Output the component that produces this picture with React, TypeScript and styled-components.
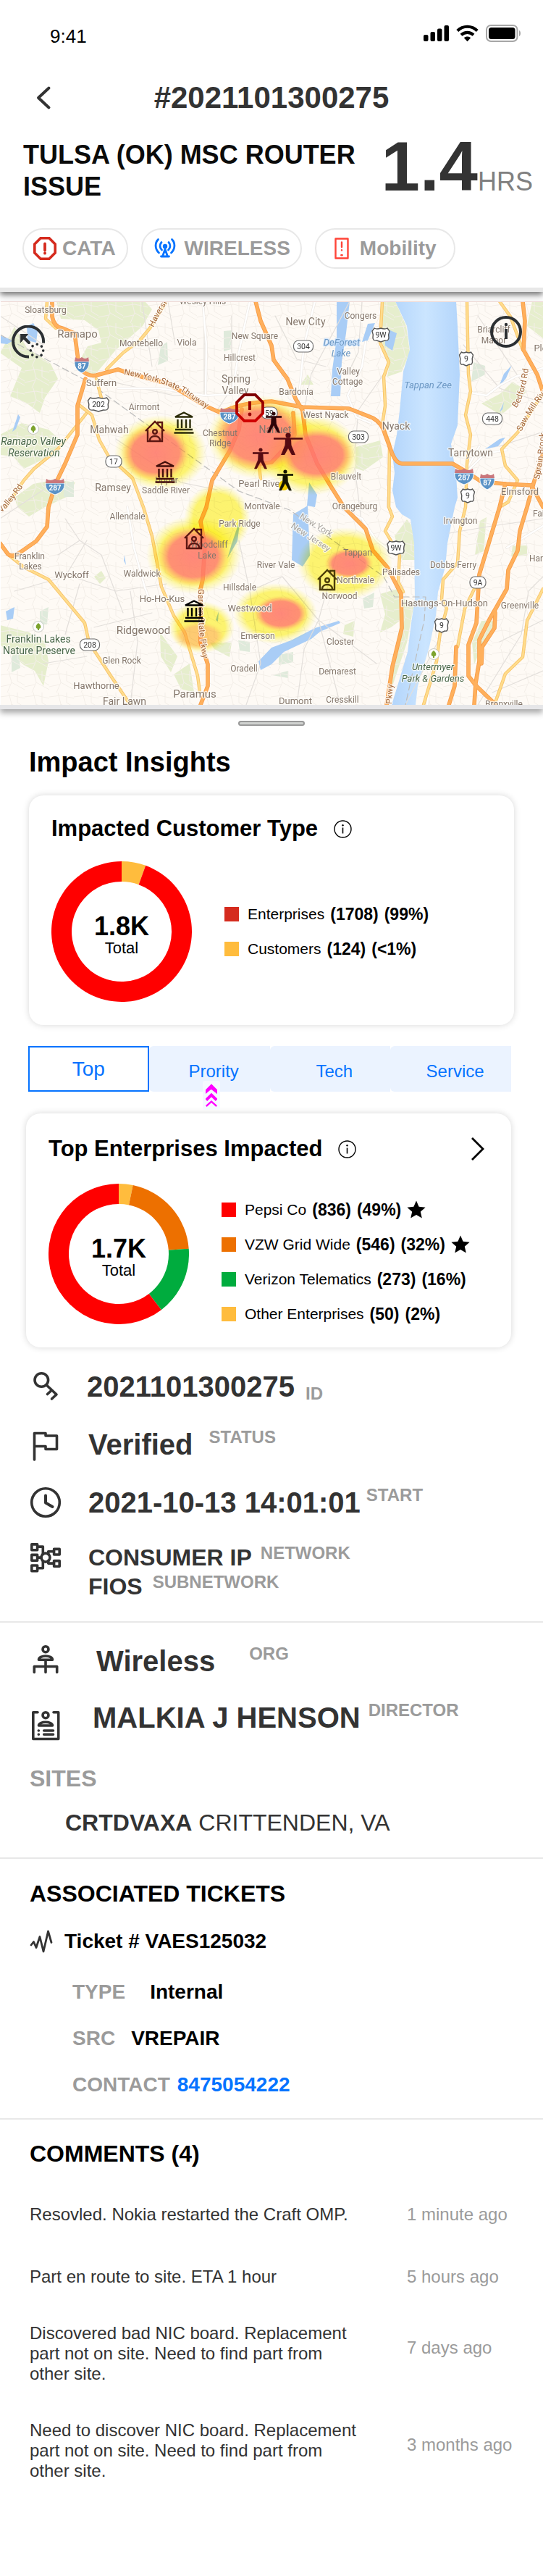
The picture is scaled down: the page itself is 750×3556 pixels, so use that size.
import React from "react";
import styled, { createGlobalStyle } from "styled-components";

const GlobalStyle = createGlobalStyle`
  *, *::before, *::after { box-sizing: border-box; }
  body {
    margin: 0;
    background: #fff;
    color: #000;
    font-family: "Liberation Sans", Arial, Helvetica, sans-serif;
  }
  h1, h2, h3, p, dl, dd, dt, ul { margin: 0; padding: 0; font-size: inherit; font-weight: inherit; }
  ul { list-style: none; }
  button { font: inherit; color: inherit; background: none; border: 0; padding: 0; cursor: pointer; }
  svg { display: block; }
`;

const ink = "#333333";
const muted = "#9b9b9b";
const blue = "#0673ff";
const hairline = "#e8e8e8";

/* ---------- header ---------- */

const Page = styled.main`
  width: 100%;
  background: #fff;
`;

const Header = styled.header`
  border-bottom: 6px solid ${hairline};
  box-shadow: 0 4px 8px rgba(0, 0, 0, 0.55);
`;

const StatusBar = styled.div`
  display: flex;
  align-items: center;
  justify-content: space-between;
  height: 100px;
  padding: 0 30px 0 69px;
  font-size: 26px;
`;

const StatusIcons = styled.div`
  display: flex;
  align-items: center;
  gap: 10px;
  padding-bottom: 8px;
`;

const NavBar = styled.nav`
  display: grid;
  grid-template-columns: 1fr auto 1fr;
  align-items: center;
  height: 70px;
  padding: 0 48px;
`;

const BackButton = styled.button`
  justify-self: start;
`;

const NavTitle = styled.h1`
  font-size: 42px;
  font-weight: 700;
  color: ${ink};
`;

const Incident = styled.div`
  display: flex;
  align-items: flex-start;
  justify-content: space-between;
  padding: 12px 14px 0 32px;
`;

const IncidentTitle = styled.h2`
  flex: 1;
  padding-top: 10px;
  font-size: 36px;
  line-height: 44px;
  font-weight: 700;
  color: #0b0b0b;
`;

const Duration = styled.p`
  display: flex;
  align-items: baseline;
  font-size: 96px;
  line-height: 96px;
  font-weight: 700;
  color: ${ink};
`;

const Unit = styled.span`
  font-size: 36px;
  line-height: 44px;
  font-weight: 400;
  color: #808080;
`;

const Chips = styled.ul`
  display: flex;
  gap: 18px;
  padding: 35px 31px 26px;
`;

const Chip = styled.li<{ $left: number; $gap: number; $right: number }>`
  display: flex;
  align-items: center;
  gap: ${(p) => p.$gap}px;
  height: 56px;
  padding: 0 ${(p) => p.$right}px 0 ${(p) => p.$left}px;
  border: 2px solid ${hairline};
  border-radius: 28px;
  font-size: 28px;
  font-weight: 700;
  color: ${muted};
`;

/* ---------- map ---------- */

const MapPanel = styled.section`
  position: relative;
  margin-top: 13px;
  border-bottom: 6px solid #e6e6e8;
  box-shadow: 0 5px 8px rgba(0, 0, 0, 0.35);
`;

const MapButton = styled.button<{ $side: "left" | "right" }>`
  position: absolute;
  top: ${(p) => (p.$side === "left" ? 33 : 19)}px;
  ${(p) => (p.$side === "left" ? "left: 16px" : "right: 28px")};
`;

const MapSvg = styled.svg`
  width: 100%;
  height: auto;
`;

/* ---------- insights ---------- */

const Handle = styled.div`
  width: 92px;
  height: 7px;
  margin: 16px auto 0;
  border: 2px solid #999;
  border-radius: 4px;
  background: #d0d2d0;
`;

const InsightsTitle = styled.h2`
  margin: 28px 40px 24px;
  font-size: 38px;
  line-height: 44px;
  font-weight: 700;
`;

const Card = styled.section<{ $left: number; $right: number; $top: number; $gap: number }>`
  display: flex;
  flex-direction: column;
  gap: ${(p) => p.$gap}px;
  margin: 0 ${(p) => p.$right}px 0 ${(p) => p.$left}px;
  padding: ${(p) => p.$top}px 36px 32px 31px;
  border-radius: 20px;
  background: #fff;
  box-shadow: 0 0 10px rgba(0, 0, 0, 0.16);
`;

const CardHead = styled.div`
  display: flex;
  align-items: center;
  gap: 22px;
`;

const CardTitle = styled.h3`
  font-size: 31px;
  line-height: 40px;
  font-weight: 700;
`;

const MoreButton = styled.button`
  margin-left: auto;
`;

const CardBody = styled.div<{ $align: string }>`
  display: flex;
  align-items: ${(p) => p.$align};
  gap: 45px;
`;

const DonutBox = styled.div`
  display: grid;
  flex: none;
  place-items: center;
  > * { grid-area: 1 / 1; }
`;

const DonutText = styled.p`
  display: flex;
  flex-direction: column;
  align-items: center;
  padding-top: 10px;
  font-size: 22px;
  line-height: 24px;
`;

const DonutTotal = styled.strong`
  font-size: 36px;
  line-height: 36px;
`;

const Legend = styled.ul`
  display: flex;
  flex-direction: column;
  gap: 20px;
`;

const LegendRow = styled.li`
  display: flex;
  align-items: center;
  gap: 8px;
  font-size: 21px;
  line-height: 28px;
  white-space: nowrap;
  strong { font-size: 23px; }
`;

const Swatch = styled.span<{ $color: string }>`
  width: 20px;
  height: 20px;
  margin-right: 4px;
  background: ${(p) => p.$color};
`;

const Tabs = styled.div`
  display: grid;
  grid-template-columns: repeat(4, 1fr);
  margin: 29px 44px 30px 39px;
`;

const TabCell = styled.div`
  position: relative;
`;

const Tab = styled.button<{ $active?: boolean }>`
  width: 100%;
  height: 63px;
  color: ${blue};
  font-size: ${(p) => (p.$active ? 28 : 24)}px;
  background: ${(p) => (p.$active ? "#fff" : "#ebf3ff")};
  border: ${(p) => (p.$active ? `2px solid ${blue}` : "0")};
  border-radius: ${(p) => (p.$active ? "0" : "6px 0 0 6px")};
  padding: ${(p) => (p.$active ? "0" : "6px 0 0 12px")};
`;

const TabMarker = styled.span`
  position: absolute;
  top: 48px;
  left: 50%;
  padding: 4px;
  border-radius: 3px;
  background: #f5f9ff;
  transform: translateX(-9px);
`;

/* ---------- details ---------- */

const Details = styled.dl`
  display: flex;
  flex-direction: column;
  gap: 32px;
  padding: 30px 41px 28px;
  border-bottom: 2px solid ${hairline};
`;

const OrgSection = styled.section`
  padding: 29px 41px 28px;
  border-bottom: 2px solid ${hairline};
`;

const OrgList = styled.dl`
  display: flex;
  flex-direction: column;
  gap: 30px;
`;

const DetailRow = styled.div<{ $gap: number; $drop?: number }>`
  display: flex;
  align-items: flex-start;
  gap: ${(p) => p.$gap}px;
  > svg { flex: none; margin-top: ${(p) => p.$drop ?? 2}px; }
`;

const DetailLine = styled.div<{ $gap: number; $small?: boolean }>`
  display: flex;
  flex-direction: row-reverse;
  justify-content: flex-end;
  gap: ${(p) => p.$gap}px;
  font-size: ${(p) => (p.$small ? 32 : 40)}px;
  line-height: ${(p) => (p.$small ? 40 : 48)}px;
  font-weight: 700;
  color: ${ink};
`;

const DetailLabel = styled.dt<{ $low?: boolean }>`
  align-self: ${(p) => (p.$low ? "flex-end" : "flex-start")};
  font-size: 24px;
  line-height: 28px;
  color: ${muted};
`;

const SitesTitle = styled.h2`
  margin-top: 30px;
  font-size: 32px;
  line-height: 40px;
  font-weight: 700;
  color: ${muted};
`;

const Site = styled.p`
  padding: 21px 0 0 49px;
  font-size: 32px;
  line-height: 40px;
  color: ${ink};
`;

/* ---------- tickets and comments ---------- */

const Section = styled.section`
  padding: 28px 41px;
  border-bottom: 2px solid ${hairline};
`;

const SectionTitle = styled.h2`
  font-size: 32px;
  line-height: 40px;
  font-weight: 700;
`;

const Ticket = styled.h3`
  display: flex;
  align-items: center;
  gap: 16px;
  margin: 28px 0 34px;
  font-size: 28px;
  line-height: 36px;
  font-weight: 700;
`;

const TicketFields = styled.dl`
  display: flex;
  flex-direction: column;
  gap: 28px;
  padding-left: 59px;
`;

const TicketField = styled.div<{ $gap: number }>`
  display: flex;
  gap: ${(p) => p.$gap}px;
  font-size: 28px;
  line-height: 36px;
  font-weight: 700;
  dt { color: ${muted}; }
  a { color: ${blue}; text-decoration: none; }
`;

const Comments = styled.section`
  padding: 27px 36px 131px 41px;
`;

const CommentList = styled.ul`
  padding-top: 50px;
`;

const Comment = styled.li<{ $short?: boolean; $space: number }>`
  display: grid;
  grid-template-columns: minmax(0, 460px) 1fr;
  column-gap: 61px;
  margin-bottom: ${(p) => p.$space}px;
  font-size: 24px;
  line-height: 28px;
  color: ${ink};
  time {
    padding-top: ${(p) => (p.$short ? 0 : 20)}px;
    color: ${muted};
  }
`;

/* ---------- drawings ---------- */

const stroke = (width = 3.4, color = ink) => ({
  fill: "none",
  stroke: color,
  strokeWidth: width,
  strokeLinecap: "round" as const,
  strokeLinejoin: "round" as const,
});

const InfoIcon = () => (
  <svg width="25" height="25" viewBox="0 0 25 25">
    <circle cx="12.5" cy="12.5" r="11.5" fill="none" stroke="#000" strokeWidth="1.4" />
    <path d="M12.5 10.5V18.5" stroke="#000" strokeWidth="1.6" />
    <circle cx="12.5" cy="7.2" r="1.2" />
  </svg>
);

const Star = () => (
  <svg width="26" height="26" viewBox="0 0 26 26">
    <path d="M13 0.5l3.6 8.3 9 .9-6.8 6 2 8.8L13 19.9l-7.8 4.6 2-8.8-6.8-6 9-.9z" />
  </svg>
);

type Slice = { from: number; to: number; color: string };

const arc = (from: number, to: number) => {
  const point = (r: number, deg: number) => {
    const a = ((deg - 90) * Math.PI) / 180;
    return `${(97 + r * Math.cos(a)).toFixed(2)} ${(97 + r * Math.sin(a)).toFixed(2)}`;
  };
  const large = to - from > 180 ? 1 : 0;
  return `M${point(97, from)}A97 97 0 ${large} 1 ${point(97, to)}L${point(69, to)}A69 69 0 ${large} 0 ${point(69, from)}Z`;
};

const Donut = ({ total, slices }: { total: string; slices: Slice[] }) => (
  <DonutBox>
    <svg width="194" height="194" viewBox="0 0 194 194">
      {slices.map((s) => (
        <path key={s.from} d={arc(s.from, s.to)} fill={s.color} />
      ))}
    </svg>
    <DonutText>
      <DonutTotal>{total}</DonutTotal>
      Total
    </DonutText>
  </DonutBox>
);

const icons = {
  key: (
    <>
      <circle cx="16.3" cy="13" r="9.3" />
      <path d="M23 19.8L37 33l-6.5 6M30.5 27L24.5 32.5" />
    </>
  ),
  flag: <path d="M6.5 41V4.5H22V8H37.5V26.5H22V22.5H6.5" />,
  clock: (
    <>
      <circle cx="22" cy="22" r="19.3" />
      <path d="M22 12.5V22.5L31.5 28" strokeWidth="4" />
    </>
  ),
  network: (
    <>
      <path d="M2.8 1.9h7.8v7.8H2.8zM2.8 16.4h7.8v7.8H2.8zM2.8 31h7.8v7.8H2.8zM33.6 8.4h7.6v7.6h-7.6zM33.6 24.6h7.6v7.6h-7.6z" />
      <circle cx="22" cy="20.1" r="6" />
      <path d="M11 5.1h7.3V15.4M11 34.7h7.3V24.9M11 20.1h5M33 11.7h-7.3V15.4M33 28.1h-7.3V24.4" />
    </>
  ),
  org: (
    <>
      <circle cx="22" cy="7.7" r="4" />
      <path d="M12.5 22.3C12.5 19 17 17 22 17s9.5 2 9.5 5.3zM22 22.5V39.5M6.3 39.5V31.5H37.7V39.5" />
    </>
  ),
  director: (
    <>
      <path d="M11 2.7H4.8V39.5H39.7V2.7H33" />
      <circle cx="22" cy="6.7" r="4" />
      <path d="M12.5 21C12.5 18 17 16.3 22 16.3s9.5 1.7 9.5 4.7zM12.3 28h.1M19.7 28h12.8M12.3 33.3h.1M19.7 33.3h12.8" />
    </>
  ),
};

const DetailIcon = ({ name }: { name: keyof typeof icons }) => (
  <svg width="44" height="44" viewBox="0 0 44 44" {...stroke(3.6)}>
    {icons[name]}
  </svg>
);

/* ---------- map data ---------- */

const greens = [
  "M78 0H200L210 11 197 34 160 67 133 99 121 101 112 78 121 62 140 57 136 40 117 26 84 24Z",
  "M0 71L12 50 20 35 37 64 70 86 80 107 62 133 55 154 36 140 14 131 30 92Z",
  "M0 184L30 168 67 177 90 197 62 217 33 231 18 214 0 212Z",
  "M20 271L46 252 77 246 104 250 92 270 62 284 40 297 24 284Z",
  "M0 447L40 457 62 470 67 497 60 531 48 510 33 502 0 474Z",
  "M290 471H320L317 491 296 480Z",
  "M528 0H546L561 34 566 70 555 97 535 104 538 84 528 57Z",
  "M492 201L525 192 529 215 502 234 490 230Z",
  "M562 301L572 314 573 357 555 357 545 324Z",
  "M525 404L552 396 552 441 540 450 525 457 532 432Z",
  "M558 411L572 417 562 471 542 531 536 531 552 450Z",
  "M735 0H750V51L728 34Z",
  "M665 141L690 128 708 111 728 124 712 140 692 157Z",
  "M665 441L685 441 668 471 655 501 652 471Z",
  "M708 337H728V351L706 352Z",
  "M663 303L672 298 668 345 656 350Z",
  "M221 457L245 490 236 512 222 490Z",
  "M240 515L262 500 268 540 250 535Z",
  "M130 380l10-8 6 10-8 8zM415 115l10-14 8 14zM476 447l14-6-2 22-14-4z",
];

const parks = [
  "M222 62l9-6 1 26-14 6zM309 41l12-1-2 26-10 3zM654 84l16 5v12l-19 10zM88 252l14-4v22l-14 0zM16 490l10-4 2 20-12 6zM55 428l12-6-2 24-10 0zM329 468l16 2 0 14-14-2zM385 488l20-4v14l-20 4zM376 516l22-6v10zM501 410l16-8-2 20-12 2z",
];

const lakes = [
  "M465 0H483L478 44 472 84 470 131 457 131 459 94 465 51Z",
  "M508 31L518 30 508 54 500 56ZM532 37L548 44 542 68 532 61Z",
  "M37 34L46 30 52 40 50 57 38 54ZM0 47L18 54 10 59 0 58Z",
  "M427 250L438 267 435 284 424 282ZM405 294L425 282 428 351 418 366 403 357Z",
  "M357 497L375 478 402 468 435 451 468 441 470 444 442 456 430 466 392 484 375 501 360 509Z",
  "M688 120L696 100 707 88 699 106ZM670 204L690 190 698 188 688 200ZM8 428L20 422 18 438 10 440Z",
  "M314 355l14-24 4-32-12 36zM17 180l8-24 3 4-6 16zM298 440l4-12-1 14zM172 350l2 14-3-6zM690 153l6-14-2 10z",
];

const minorRoads = [
  "M0 20L60 60M150 110L240 130 320 128M232 0L242 60M282 0V130M0 300L60 260M320 20V120L300 150",
  "M90 300L110 330 140 350 170 430M110 330L80 350M160 190L250 250 300 260M196 0L210 90",
  "M330 330L345 400 360 500 340 557M345 400L390 380 440 440M470 330L440 440 420 480 410 557M440 440L520 500M440 440L470 557",
  "M480 100L495 70 500 0M483 0L430 100 420 150M490 230L500 310M530 100L495 150 490 210",
  "M660 20L720 110M640 60L690 120 750 140M690 200L750 180M560 557L620 440M620 320L680 310 750 300",
  "M660 557L720 460 730 400 750 380M690 470L750 440M680 540L750 510M100 380L160 400 230 390M110 390L90 460",
  "M180 400L190 470 180 557M130 450L210 430M20 400L90 380 120 330M60 500L120 490M380 20L410 80 450 90",
];

const whiteRoads = [
  "M435 0L420 60 412 140 400 160",
  "M280 0L285 60 284 130 320 128 330 70 345 0",
  "M505 56L500 90 480 130 492 160 512 168",
  "M650 126L672 130 690 116 712 104 750 92",
  "M163 120L220 120 283 130",
  "M176 284L185 340 200 395 206 410",
  "M468 284L500 300 520 330 540 345",
  "M662 200L640 240 670 210 700 205",
  "M700 340L750 310M600 480L590 557",
];

const yellowRoads = [
  "M65 0L63 24 77 37",
  "M230 0L207 37 193 54 170 71 147 94",
  "M133 107L142 141",
  "M108 142L127 157 137 191 150 214 183 244 198 284 210 324 223 394 240 434 255 457 273 517 276 540",
  "M119 155L80 204 47 231 33 247 8 284",
  "M13 351L33 367 67 384 117 444 123 471 153 517 180 557",
  "M528 0L525 57 537 84 530 104 532 144 528 170 538 197 537 284 542 297 532 317 552 351 550 387 557 401",
  "M645 0L647 101 650 124 643 157 650 184 645 224 643 284 635 317 632 361 612 384 610 411 617 424 608 457 603 497 585 557",
  "M688 290L682 311 658 391 642 424 632 477",
  "M750 127L715 181 693 204 698 227 715 247 702 277 690 284",
  "M750 397L728 441 722 491 698 514 685 551",
  "M690 0L705 21 722 67",
  "M358 228L360 245M333 150L300 151",
];

const highways = [
  "M72 0L72 21Q75 36 86 37L103 44 108 81 115 97Q123 104 133 102L163 94 177 99 233 114 283 144 305 154Q330 140 375 138L418 146 482 148 515 161Q528 168 532 184L542 211Q548 224 555 224L625 224 642 234 665 249 698 252 735 254",
  "M118 107L107 144V184L90 224 77 251 67 284 65 311 50 331 27 347Q17 354 11 349L0 334",
  "M353 0L360 27 375 61 378 81 397 107 408 134 418 151 422 184 438 224 458 257 475 284 505 314 515 344 535 367 554 404 555 451 542 504 538 531 534 557",
  "M334 149L330 177 317 207 293 247 285 284 277 304 283 337 280 384 277 397 277 471 287 501 287 531 277 557",
  "M405 154L407 184 392 204 375 222 360 224",
  "M722 0L725 27 723 67 742 101 750 125",
  "M750 210L737 251 728 284 718 317 715 344 702 371 700 397 675 441 662 467 662 497 657 527 655 557",
  "M698 252L690 284 675 334 662 377 658 444 647 474 647 517 657 530 685 557",
  "M630 477L628 531 620 557",
  "M684 430L683 451 666 477 665 500",
  "M735 256L750 284",
];

const redBlobs = [
  [215, 209, 48, 40],
  [358, 186, 64, 50],
  [438, 212, 52, 38],
  [267, 352, 50, 42],
  [482, 362, 34, 22],
  [388, 431, 38, 25],
  [275, 462, 36, 20],
];

const yellowBlobs = [
  [222, 209, 64, 52],
  [362, 188, 76, 58],
  [430, 212, 68, 56],
  [268, 350, 66, 54],
  [300, 300, 46, 48],
  [476, 362, 66, 50],
  [380, 431, 58, 42],
  [278, 450, 46, 36],
];

type PlaceTone = "town" | "water" | "park" | "parkItalic";
type Place = [string, number, number, number, PlaceTone?];

const places: Place[] = [
  ["Sloatsburg", 63, 16, 12],
  ["Ramapo", 107, 50, 15],
  ["Montebello", 195, 62, 12],
  ["Viola", 258, 61, 12],
  ["Wesley Hills", 280, 4, 12],
  ["New Square", 352, 52, 12],
  ["Hillcrest", 331, 82, 12],
  ["Spring", 326, 112, 14],
  ["Valley", 325, 128, 14],
  ["Suffern", 140, 117, 13],
  ["Airmont", 199, 150, 12],
  ["Mahwah", 151, 182, 14],
  ["Chestnut", 304, 186, 12],
  ["Ridge", 304, 200, 12],
  ["Ramapo Valley", 46, 198, 14, "parkItalic"],
  ["Reservation", 47, 214, 14, "parkItalic"],
  ["Ramsey", 156, 262, 14],
  ["Upper", 230, 251, 12],
  ["Saddle River", 229, 265, 12],
  ["Pearl River", 360, 256, 13],
  ["Montvale", 362, 287, 12],
  ["Nanuet", 380, 182, 14],
  ["New City", 422, 33, 14],
  ["Congers", 498, 24, 12],
  ["DeForest", 472, 61, 13, "water"],
  ["Lake", 471, 76, 13, "water"],
  ["Valley", 481, 101, 12],
  ["Cottage", 480, 115, 12],
  ["Bardonia", 409, 129, 12],
  ["West Nyack", 450, 161, 12],
  ["Nyack", 547, 177, 14],
  ["Tappan Zee", 591, 120, 13, "water"],
  ["Blauvelt", 478, 246, 12],
  ["Orangeburg", 490, 287, 12],
  ["Briarcliff", 682, 43, 12],
  ["Manor", 682, 58, 12],
  ["Pleasantville", 774, 69, 13],
  ["Tarrytown", 650, 214, 14],
  ["Elmsford", 718, 267, 13],
  ["Allendale", 176, 301, 12],
  ["Park Ridge", 331, 311, 12],
  ["Woodcliff", 289, 340, 12],
  ["Lake", 286, 355, 12],
  ["River Vale", 381, 368, 12],
  ["Franklin", 41, 356, 12],
  ["Lakes", 42, 370, 12],
  ["Wyckoff", 99, 382, 13],
  ["Waldwick", 196, 380, 12],
  ["Hillsdale", 331, 399, 12],
  ["Ho-Ho-Kus", 224, 415, 13],
  ["Westwood", 345, 428, 13],
  ["Ridgewood", 198, 459, 15],
  ["Emerson", 356, 466, 12],
  ["Franklin Lakes", 53, 471, 14, "park"],
  ["Nature Preserve", 54, 487, 14, "park"],
  ["Glen Rock", 168, 500, 12],
  ["Oradell", 337, 511, 12],
  ["Hawthorne", 133, 535, 13],
  ["Paramus", 269, 547, 15],
  ["Fair Lawn", 172, 557, 14],
  ["Irvington", 636, 307, 12],
  ["Fairview", 758, 297, 12],
  ["Tappan", 494, 351, 12],
  ["Northvale", 491, 389, 12],
  ["Norwood", 469, 411, 12],
  ["Palisades", 554, 378, 12],
  ["Dobbs Ferry", 626, 368, 12],
  ["Hartsdale", 757, 359, 12],
  ["Hastings-On-Hudson", 614, 421, 13],
  ["Greenville", 718, 424, 12],
  ["Closter", 470, 474, 12],
  ["Untermyer", 598, 509, 13, "parkItalic"],
  ["Park & Gardens", 598, 525, 13, "parkItalic"],
  ["Demarest", 466, 515, 12],
  ["Dumont", 408, 556, 13],
  ["Cresskill", 473, 554, 12],
  ["Bronxville", 696, 560, 12],
];

const toneFill: Record<PlaceTone, string> = {
  town: "#85776c",
  water: "#6c98c4",
  park: "#49674a",
  parkItalic: "#49674a",
};

const roadNames: [string, string, string][] = [
  ["thruway", "M171 101Q235 112 262 132T296 152", "New York State Thruway"],
  ["haverstraw", "M212 36Q222 14 236 -6", "Haverstraw Rd"],
  ["bedford", "M713 147Q724 135 730 93", "Bedford Rd"],
  ["sawmill", "M720 180Q740 140 768 112", "Saw Mill River"],
  ["sprain", "M745 246Q754 200 754 150", "Sprain Brook"],
  ["valley", "M2 292Q26 268 42 238", "Valley Rd"],
  ["garden", "M274 397Q272 450 282 505", "Garden State Pkwy"],
  ["pkwy", "M541 556L543 528", "Pkwy"],
];

const Interstate = ({ x, y, n }: { x: number; y: number; n: string }) => {
  const w = n.length > 2 ? 13 : 10;
  return (
    <g transform={`translate(${x} ${y})`}>
      <path d={`M${-w} -4C${-w - 1} 4 ${-w + 4} 9 0 12C${w - 4} 9 ${w + 1} 4 ${w} -4Z`} fill="#5a92c6" stroke="#fff" strokeWidth="1" />
      <path d={`M${-w} -4L${-w + 1} -10Q${-w / 2} -6 0 -10Q${w / 2} -6 ${w - 1} -10L${w} -4Z`} fill="#c9777c" />
      <text y="6" fontSize="10" fontWeight="700" fill="#fff" textAnchor="middle">{n}</text>
    </g>
  );
};

const Route = ({ x, y, n, us }: { x: number; y: number; n: string; us?: boolean }) => {
  const w = n.length * 5 + 12;
  return (
    <g transform={`translate(${x} ${y})`}>
      {us ? (
        <path
          d={`M${-w / 2 + 2} -9Q${-w / 4} -7 0 -9Q${w / 4} -7 ${w / 2 - 2} -9L${w / 2 + 1} -5Q${w / 2 - 1} 0 ${w / 2} 4Q${w / 2} 9 ${w / 4} 8L0 10L${-w / 4} 8Q${-w / 2} 9 ${-w / 2} 4Q${-w / 2 + 1} 0 ${-w / 2 - 1} -5Z`}
          fill="#fff"
          stroke="#555"
          strokeWidth="1.4"
        />
      ) : (
        <rect x={-w / 2} y="-8" width={w} height="16" rx="7" fill="#fff" stroke="#6d6d6d" strokeWidth="1.2" />
      )}
      <text y="4" fontSize="10.5" fill="#333" textAnchor="middle">{n}</text>
    </g>
  );
};

const ParkPin = ({ x, y }: { x: number; y: number }) => (
  <g transform={`translate(${x} ${y})`}>
    <circle r="7.5" fill="#fff" stroke="#c9c9c2" strokeWidth="1" />
    <path d="M0 -5C3 -3 4 0 3 2L1 3V5H-1V3L-3 2C-4 0 -3 -3 0 -5Z" fill="#7da32f" />
  </g>
);

const Bank = ({ x, y, color }: { x: number; y: number; color: string }) => (
  <g transform={`translate(${x} ${y})`} fill="none" stroke={color} strokeWidth="2.4">
    <path d="M-12 -7.5L0 -13.5 12 -7.5ZM-8.5 -4V8M-3 -4V8M3 -4V8M8.500 -4V8M-12 10H12M-13.500 14.500H13.500" />
  </g>
);

const House = ({ x, y, color }: { x: number; y: number; color: string }) => (
  <g transform={`translate(${x} ${y})`} fill="none" stroke={color} strokeWidth="2.4">
    <path d="M-13 0L0 -13 13 0M-10 -2V14H10V-2M4 -9V-12H10V-4M-7 13C-7 5 7 5 7 13" />
    <circle cy="1" r="2.8" />
  </g>
);

const Person = ({ x, y, color, wide }: { x: number; y: number; color: string; wide?: boolean }) => {
  const arm = wide ? 20 : 11;
  return (
    <g transform={`translate(${x} ${y})`} fill={color} stroke={color}>
      <circle cy="-12" r={wide ? 3.6 : 2.6} stroke="none" />
      <path d={`M${-arm} -7.5H${arm}`} strokeWidth="2.6" />
      <path d="M-3 -7H3L3.5 2 8.5 14H5.5L0 4 -5.5 14H-8.5L-3.5 2Z" strokeWidth={wide ? 2 : 0.6} />
    </g>
  );
};

const AreaMap = () => (
  <MapSvg viewBox="0 0 750 557" fontFamily="Roboto, sans-serif" role="img" aria-label="Outage heat map">
    <defs>
      <linearGradient id="river" x1="0" x2="1">
        <stop offset="0" stopColor="#b3d5fb" />
        <stop offset="0.5" stopColor="#cbe5ff" />
        <stop offset="1" stopColor="#b3d5fb" />
      </linearGradient>
      <radialGradient id="hot">
        <stop offset="0" stopColor="#ff6f7c" stopOpacity="0.9" />
        <stop offset="0.68" stopColor="#ff7474" stopOpacity="0.86" />
        <stop offset="0.82" stopColor="#ff9a66" stopOpacity="0.55" />
        <stop offset="1" stopColor="#ffd94d" stopOpacity="0" />
      </radialGradient>
      <radialGradient id="warm">
        <stop offset="0" stopColor="#fdf000" stopOpacity="0.55" />
        <stop offset="0.72" stopColor="#fbf200" stopOpacity="0.55" />
        <stop offset="1" stopColor="#fbf75a" stopOpacity="0" />
      </radialGradient>
      <linearGradient id="alert" x1="0" x2="0" y1="0" y2="1">
        <stop offset="0" stopColor="#7d0000" />
        <stop offset="1" stopColor="#d00000" />
      </linearGradient>
      <pattern id="streets" width="34" height="30" patternUnits="userSpaceOnUse">
        <path d="M0 6L16 4 34 8M12 0L16 16 10 30M24 0V14L34 20M16 16L34 26M0 22L14 19" fill="none" stroke="#f3eee8" strokeWidth="1" />
      </pattern>
      <clipPath id="frame"><path d="M1 0H750V557H1Z" /></clipPath>
    </defs>
    <g clipPath="url(#frame)">
      <path d="M0 0H750V557H0Z" fill="#fefaf5" />
      {greens.map((d) => <path key={d} d={d} fill="#e6eecd" />)}
      {parks.map((d) => <path key={d} d={d} fill="#dfeadb" />)}
      <path d="M0 0H750V557H0Z" fill="url(#streets)" />
      <path
        d="M546 0L562 34 566 67 557 97 552 151 548 184 542 211 545 237 542 261 547 284 555 294 567 301 572 334 573 411 568 444 563 484 555 511 541 557H574L577 531 593 477 602 434 605 401 615 367 618 334 628 284 632 271 630 240 623 197 632 171 635 101 632 34 630 0Z"
        fill="url(#river)"
      />
      {lakes.map((d) => <path key={d} d={d} fill="#a9cdf6" />)}
      <g fill="none" strokeLinecap="round" strokeLinejoin="round">
        {minorRoads.map((d) => <path key={d} d={d} stroke="#e3dfdb" strokeWidth="1.2" />)}
        {whiteRoads.map((d) => <path key={d} d={d} stroke="#ebe6e1" strokeWidth="3.6" />)}
        {whiteRoads.map((d) => <path key={d} d={d} stroke="#fff" strokeWidth="2.4" />)}
        <path d="M0 46L120 110 200 168 330 262 400 288 460 330 530 380 545 408 588 408 586 440 560 557" stroke="#bdbdbd" strokeWidth="1.2" strokeDasharray="9 5" />
        {yellowRoads.map((d) => <path key={d} d={d} stroke="#f7c165" strokeWidth="4.4" />)}
        {yellowRoads.map((d) => <path key={d} d={d} stroke="#ffdc8c" strokeWidth="2.8" />)}
        {highways.map((d) => <path key={d} d={d} stroke="#f79a45" strokeWidth="5.6" />)}
        {highways.map((d) => <path key={d} d={d} stroke="#ffb05c" strokeWidth="4" />)}
      </g>

      <g style={{ mixBlendMode: "multiply" }}>
        {yellowBlobs.map(([cx, cy, rx, ry]) => (
          <ellipse key={`${cx}`} cx={cx} cy={cy} rx={rx} ry={ry} fill="url(#warm)" />
        ))}
      </g>
      {redBlobs.map(([cx, cy, rx, ry], i) => (
        <ellipse key={cx} cx={cx} cy={cy} rx={rx} ry={ry} fill="url(#hot)" opacity={i === 6 ? 0.35 : 0.9} />
      ))}

      <g stroke="#fffdf9" strokeOpacity="0.75" strokeWidth="2.6" strokeLinejoin="round" paintOrder="stroke">
        {places.map(([name, x, y, size, tone = "town"]) => (
          <text
            key={`${name}-${x}`}
            x={x}
            y={y}
            fontSize={size}
            textAnchor="middle"
            fill={toneFill[tone]}
            fontStyle={tone === "water" || tone === "parkItalic" ? "italic" : "normal"}
            stroke={tone === "water" ? "#c4dffc" : "inherit"}
            strokeOpacity={["Nanuet", "Woodcliff", "Lake", "Upper", "Tappan", "Chestnut", "Ridge"].includes(name) ? 0 : 0.75}
          >
            {name}
          </text>
        ))}
        <text transform="translate(413 299) rotate(31)" fontSize="12" fill="#a9a49e">New York</text>
        <text transform="translate(401 312) rotate(33)" fontSize="12" fill="#a9a49e">New Jersey</text>
        {roadNames.map(([id, d, name]) => (
          <React.Fragment key={id}>
            <path id={id} d={d} fill="none" stroke="none" />
            <text fontSize="11.5" fill="#a5683c">
              <textPath href={`#${id}`}>{name}</textPath>
            </text>
          </React.Fragment>
        ))}
      </g>

      <Interstate x={113} y={87} n="87" />
      <Interstate x={76} y={255} n="287" />
      <Interstate x={317} y={157} n="287" />
      <Interstate x={641} y={241} n="287" />
      <Interstate x={673} y={248} n="87" />
      <Route x={136} y={142} n="202" us />
      <Route x={157} y={221} n="17" />
      <Route x={372} y={154} n="59" />
      <Route x={419} y={62} n="304" />
      <Route x={526} y={46} n="9W" us />
      <Route x={644} y={79} n="9" us />
      <Route x={680} y={162} n="448" />
      <Route x={495} y={187} n="303" />
      <Route x={646} y={268} n="9" us />
      <Route x={124} y={474} n="208" />
      <Route x={547} y={340} n="9W" us />
      <Route x={660} y={388} n="9A" />
      <Route x={610} y={447} n="9" us />
      <ParkPin x={46} y={176} />
      <ParkPin x={53} y={449} />
      <ParkPin x={599} y={487} />

      <Bank x={254} y={167} color="#2c2c08" />
      <Bank x={228} y={235} color="#45100c" />
      <Bank x={268} y={427} color="#000" />
      <House x={214} y={179} color="#5c1712" />
      <House x={268} y={327} color="#5c1712" />
      <House x={452} y={384} color="#4b3d08" />
      <circle cx="392" cy="254" r="7" fill="#f7cf00" />
      <Person x={360} y={217} color="#560b12" />
      <Person x={378} y={167} color="#2e0408" />
      <Person x={398} y={197} color="#560b12" wide />
      <Person x={394} y={247} color="#141400" />
      <path d="M337.5 129H352.5L363 139.5V154.5L352.5 165H337.5L327 154.5V139.5Z" fill="none" stroke="url(#alert)" strokeWidth="3.8" />
      <path d="M345 138V150" stroke="#9a0000" strokeWidth="4" />
      <circle cx="345" cy="156" r="2.4" fill="#9a0000" />
      <path d="M0 0.5H750" stroke="#efd9d5" strokeWidth="1" />
    </g>
  </MapSvg>
);

/* ---------- content ---------- */

const customerSlices: Slice[] = [
  { from: 0, to: 20, color: "#ffbc3d" },
  { from: 20, to: 360, color: "#ff0000" },
];

const enterpriseSlices: Slice[] = [
  { from: 0, to: 11.7, color: "#ffbc3d" },
  { from: 11.7, to: 85.7, color: "#ed7000" },
  { from: 85.7, to: 142.7, color: "#00ac3e" },
  { from: 142.7, to: 360, color: "#ff0000" },
];

type LegendItem = { color: string; name: string; count: string; share: string; starred?: boolean };

const customerLegend: LegendItem[] = [
  { color: "#d52b1e", name: "Enterprises", count: "(1708)", share: "(99%)" },
  { color: "#ffbc3d", name: "Customers", count: "(124)", share: "(<1%)" },
];

const enterpriseLegend: LegendItem[] = [
  { color: "#ff0000", name: "Pepsi Co", count: "(836)", share: "(49%)", starred: true },
  { color: "#ed7000", name: "VZW Grid Wide", count: "(546)", share: "(32%)", starred: true },
  { color: "#00ac3e", name: "Verizon Telematics", count: "(273)", share: "(16%)" },
  { color: "#ffbc3d", name: "Other Enterprises", count: "(50)", share: "(2%)" },
];

const comments = [
  { text: "Resovled. Nokia restarted the Craft OMP.", when: "1 minute ago", short: true, space: 58 },
  { text: "Part en route to site. ETA 1 hour", when: "5 hours ago", short: true, space: 50 },
  { text: "Discovered bad NIC board. Replacement part not on site. Need to find part from other site.", when: "7 days ago", space: 50 },
  { text: "Need to discover NIC board. Replacement part not on site. Need to find part from other site.", when: "3 months ago", space: 0 },
];

const LegendList = ({ items }: { items: LegendItem[] }) => (
  <Legend>
    {items.map((item) => (
      <LegendRow key={item.name}>
        <Swatch $color={item.color} />
        <span>{item.name}</span>
        <strong>{item.count}</strong>
        <strong>{item.share}</strong>
        {item.starred && <Star />}
      </LegendRow>
    ))}
  </Legend>
);

export default function App() {
  return (
    <Page>
      <GlobalStyle />
      <Header>
        <StatusBar>
          <span>9:41</span>
          <StatusIcons>
            <svg width="35" height="24" viewBox="0 0 35 24">
              <rect x="0" y="14" width="6.5" height="9" rx="2" />
              <rect x="9.5" y="10" width="6.5" height="13" rx="2" />
              <rect x="19" y="5.5" width="6.5" height="17.5" rx="2" />
              <rect x="28.5" y="1" width="6.5" height="22" rx="2" />
            </svg>
            <svg width="31" height="24" viewBox="0 0 31 24" fill="none" stroke="#000" strokeWidth="4.2">
              <path d="M1.8 8.5C9.5 0.8 21.5 0.8 29.2 8.5" />
              <path d="M7 14.3C12 9.7 19 9.7 24 14.3" />
              <path d="M10.8 18.3C13.5 15.8 17.5 15.8 20.2 18.3L15.5 23.2Z" fill="#000" stroke="none" />
            </svg>
            <svg width="49" height="24" viewBox="0 0 49 24">
              <rect x="1" y="1" width="42.5" height="22" rx="6" fill="none" stroke="#a6a6a6" strokeWidth="2" />
              <rect x="4" y="4" width="36.5" height="16" rx="3.5" />
              <path d="M46 8C48.7 9 48.7 15 46 16Z" fill="#a6a6a6" />
            </svg>
          </StatusIcons>
        </StatusBar>
        <NavBar aria-label="Incident">
          <BackButton aria-label="Back">
            <svg width="24" height="34" viewBox="0 0 24 34" {...stroke(4)}>
              <path d="M19.5 3.5L5 17L19.5 30.5" />
            </svg>
          </BackButton>
          <NavTitle>#2021101300275</NavTitle>
        </NavBar>
        <Incident>
          <IncidentTitle>TULSA (OK) MSC ROUTER ISSUE</IncidentTitle>
          <Duration>
            1.4<Unit>HRS</Unit>
          </Duration>
        </Incident>
        <Chips>
          <Chip $left={13} $gap={8} $right={15}>
            <svg width="32" height="32" viewBox="0 0 32 32">
              <path d="M10 1.8H22L30.2 10V22L22 30.2H10L1.8 22V10Z" fill="#fff" stroke="#d52b1e" strokeWidth="3.6" />
              <path d="M16 9.5V18.5M16 22.5v.2" stroke="#d52b1e" strokeWidth="3.8" strokeLinecap="round" />
            </svg>
            CATA
          </Chip>
          <Chip $left={16} $gap={12} $right={14}>
            <svg width="30" height="30" viewBox="0 0 30 30" {...stroke(2.8, blue)}>
              <circle cx="15" cy="12" r="3.2" fill={blue} strokeWidth="0" />
              <path d="M15 16L11.5 26H18.500ZM15 13V18M9.500 26h11" />
              <path d="M10.5 17C7.3 14 7.3 9.5 10 6.5M6.5 21C0.5 15 1 7 5.5 2.5M19.5 17C22.7 14 22.7 9.5 20 6.5M23.5 21C29.5 15 29 7 24.5 2.5" />
            </svg>
            WIRELESS
          </Chip>
          <Chip $left={25} $gap={15} $right={24}>
            <svg width="20" height="30" viewBox="0 0 20 30" {...stroke(2.4, "#ff4438")}>
              <path d="M1.5 1.5H18.5V28.5H1.5Z" />
              <path d="M10 6.5V13M10 17.2v.2M9.3 24.2h1.4" />
            </svg>
            Mobility
          </Chip>
        </Chips>
      </Header>

      <MapPanel>
        <AreaMap />
        <MapButton $side="left" aria-label="Recenter map">
          <svg width="48" height="48" viewBox="0 0 48 48" {...stroke(4, "#2c3033")}>
            <path d="M44 24.5A21 21 0 1 0 24 43.5" strokeLinecap="butt" />
            <path d="M24 24L16 16" />
            <path d="M12.5 12.5H22.5L12.5 23.5Z" fill="#2c3033" strokeWidth="1" />
            <circle cx="35" cy="35" r="8.7" strokeWidth="3.6" strokeDasharray="0.1 6.73" />
          </svg>
        </MapButton>
        <MapButton $side="right" aria-label="Map information">
          <svg width="46" height="46" viewBox="0 0 46 46" {...stroke(4, "#2c3033")}>
            <circle cx="23" cy="23" r="20" />
            <path d="M23 19V33" strokeLinecap="butt" />
            <circle cx="23" cy="13" r="2.2" fill="#2c3033" strokeWidth="0" />
          </svg>
        </MapButton>
      </MapPanel>

      <Handle />
      <InsightsTitle>Impact Insights</InsightsTitle>

      <Card $left={40} $right={40} $top={26} $gap={25}>
        <CardHead>
          <CardTitle>Impacted Customer Type</CardTitle>
          <InfoIcon />
        </CardHead>
        <CardBody $align="center">
          <Donut total="1.8K" slices={customerSlices} />
          <LegendList items={customerLegend} />
        </CardBody>
      </Card>

      <Tabs>
        <Tab $active>Top</Tab>
        <TabCell>
          <Tab>Prority</Tab>
          <TabMarker>
            <svg width="16" height="32" viewBox="0 0 16 32" fill="none" stroke="#ff00ff">
              <path d="M0 8.5L8 0.5L16 8.5V14L8 7.5L0 14Z" fill="#ff00ff" stroke="none" />
              <path d="M0 8.5L8 0.5L16 8.5V14L8 8Z" fill="#ff00ff" stroke="none" />
              <path d="M0.8 22.5L8 15.5L15.2 22.5" strokeWidth="4" />
              <path d="M0.8 31L8 24.5L15.2 31" strokeWidth="2.4" />
            </svg>
          </TabMarker>
        </TabCell>
        <Tab>Tech</Tab>
        <Tab>Service</Tab>
      </Tabs>

      <Card $left={36} $right={44} $top={29} $gap={28}>
        <CardHead>
          <CardTitle>Top Enterprises Impacted</CardTitle>
          <InfoIcon />
          <MoreButton aria-label="All enterprises">
            <svg width="20" height="32" viewBox="0 0 20 32" fill="none" stroke="#000" strokeWidth="2.8">
              <path d="M2 1L17 16L2 31" />
            </svg>
          </MoreButton>
        </CardHead>
        <CardBody $align="flex-end">
          <Donut total="1.7K" slices={enterpriseSlices} />
          <LegendList items={enterpriseLegend} />
        </CardBody>
      </Card>

      <Details>
        <DetailRow $gap={35}>
          <DetailIcon name="key" />
          <DetailLine $gap={15}>
            <DetailLabel $low>ID</DetailLabel>
            <dd>2021101300275</dd>
          </DetailLine>
        </DetailRow>
        <DetailRow $gap={37} $drop={4}>
          <DetailIcon name="flag" />
          <DetailLine $gap={22}>
            <DetailLabel>STATUS</DetailLabel>
            <dd>Verified</dd>
          </DetailLine>
        </DetailRow>
        <DetailRow $gap={37}>
          <DetailIcon name="clock" />
          <DetailLine $gap={8}>
            <DetailLabel>START</DetailLabel>
            <dd>2021-10-13 14:01:01</dd>
          </DetailLine>
        </DetailRow>
        <DetailRow $gap={37} $drop={0}>
          <DetailIcon name="network" />
          <div>
            <DetailLine $gap={12} $small>
              <DetailLabel>NETWORK</DetailLabel>
              <dd>CONSUMER IP</dd>
            </DetailLine>
            <DetailLine $gap={14} $small>
              <DetailLabel>SUBNETWORK</DetailLabel>
              <dd>FIOS</dd>
            </DetailLine>
          </div>
        </DetailRow>
      </Details>

      <OrgSection>
        <OrgList>
          <DetailRow $gap={48} $drop={0}>
            <DetailIcon name="org" />
            <DetailLine $gap={47}>
              <DetailLabel>ORG</DetailLabel>
              <dd>Wireless</dd>
            </DetailLine>
          </DetailRow>
          <DetailRow $gap={43} $drop={14}>
            <DetailIcon name="director" />
            <DetailLine $gap={11}>
              <DetailLabel>DIRECTOR</DetailLabel>
              <dd>MALKIA J HENSON</dd>
            </DetailLine>
          </DetailRow>
        </OrgList>
        <SitesTitle>SITES</SitesTitle>
        <Site>
          <strong>CRTDVAXA</strong> CRITTENDEN, VA
        </Site>
      </OrgSection>

      <Section>
        <SectionTitle>ASSOCIATED TICKETS</SectionTitle>
        <Ticket>
          <svg width="32" height="32" viewBox="0 0 32 32" {...stroke(2.8)}>
            <path d="M2 21L5.5 16.5L9 24.5L14 9.5L19 30L25.5 2L30 17.5" />
          </svg>
          Ticket # VAES125032
        </Ticket>
        <TicketFields>
          <TicketField $gap={34}>
            <dt>TYPE</dt>
            <dd>Internal</dd>
          </TicketField>
          <TicketField $gap={22}>
            <dt>SRC</dt>
            <dd>VREPAIR</dd>
          </TicketField>
          <TicketField $gap={10}>
            <dt>CONTACT</dt>
            <dd><a href="tel:8475054222">8475054222</a></dd>
          </TicketField>
        </TicketFields>
      </Section>

      <Comments>
        <SectionTitle>COMMENTS (4)</SectionTitle>
        <CommentList>
          {comments.map((c) => (
            <Comment key={c.when} $short={c.short} $space={c.space}>
              <p>{c.text}</p>
              <time>{c.when}</time>
            </Comment>
          ))}
        </CommentList>
      </Comments>
    </Page>
  );
}
